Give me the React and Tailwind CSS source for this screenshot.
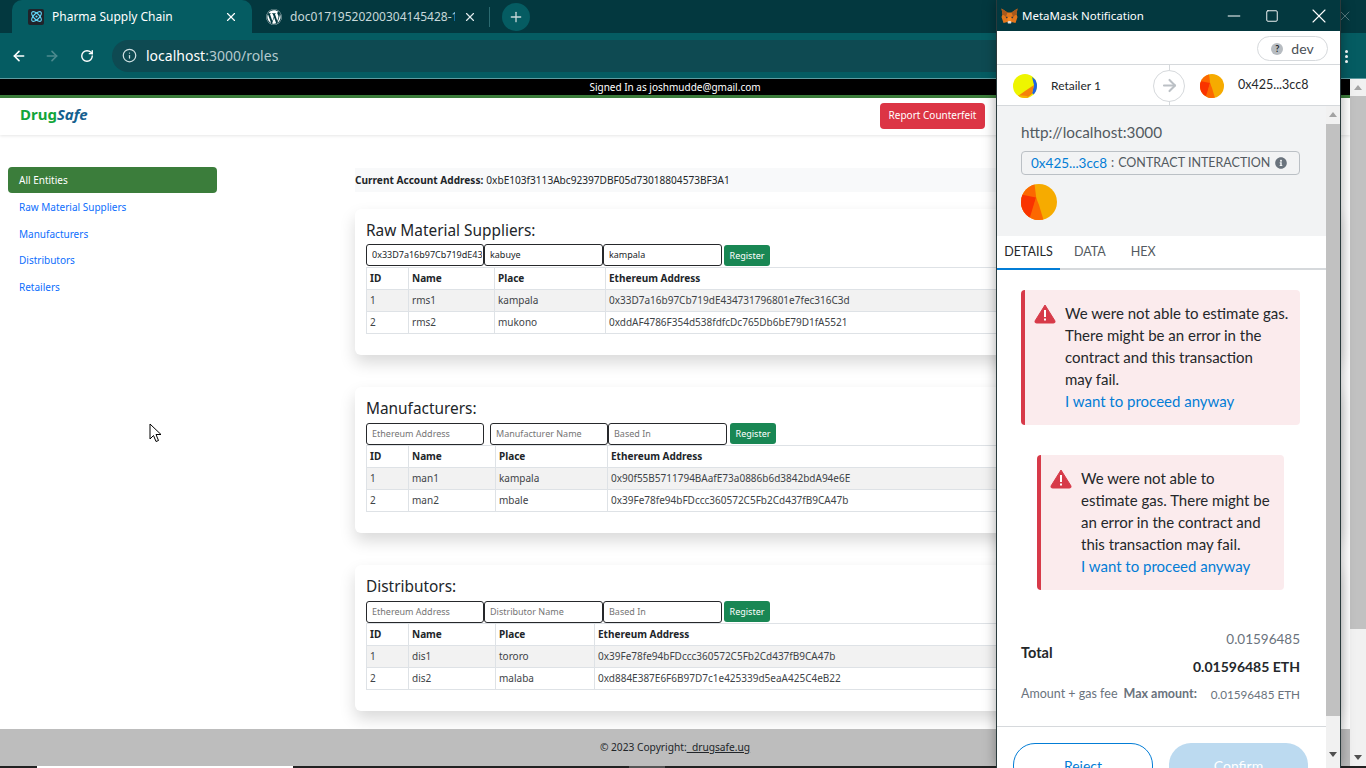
import { ArrowLeft, ArrowRight, RotateCw, Info, X, Plus, Atom, Minus, Square, ArrowRight as Arrow } from "lucide-react"
import { FaWordpress, FaInfoCircle } from "react-icons/fa"

const sections = [
  {
    title: "Raw Material Suppliers:",
    top: "h-[35px] pb-[6px]",
    row: "h-[23px]",
    inputs: [
      { value: "0x33D7a16b97Cb719dE43", w: "w-[118px]" },
      { value: "kabuye", w: "w-[119px]" },
      { value: "kampala", w: "w-[119px]" },
    ],
    btnGap: "ml-[2px] mt-[1px]",
    cols: ["w-[42px]", "w-[86px]", "w-[111px]", ""],
    rows: [
      ["1", "rms1", "kampala", "0x33D7a16b97Cb719dE434731796801e7fec316C3d"],
      ["2", "rms2", "mukono", "0xddAF4786F354d538fdfcDc765Db6bE79D1fA5521"],
    ],
  },
  {
    title: "Manufacturers:",
    top: "h-[36px] pb-[7px]",
    row: "h-[22px]",
    inputs: [
      { ph: "Ethereum Address", w: "w-[118px] mr-[6px]" },
      { ph: "Manufacturer Name", w: "w-[118px]" },
      { ph: "Based In", w: "w-[119px]" },
    ],
    btnGap: "ml-[3px]",
    cols: ["w-[42px]", "w-[87px]", "w-[112px]", ""],
    rows: [
      ["1", "man1", "kampala", "0x90f55B5711794BAafE73a0886b6d3842bdA94e6E"],
      ["2", "man2", "mbale", "0x39Fe78fe94bFDccc360572C5Fb2Cd437fB9CA47b"],
    ],
  },
  {
    title: "Distributors:",
    top: "h-[36px] pb-[7px]",
    row: "h-[22px]",
    inputs: [
      { ph: "Ethereum Address", w: "w-[118px]" },
      { ph: "Distributor Name", w: "w-[119px]" },
      { ph: "Based In", w: "w-[119px]" },
    ],
    btnGap: "ml-[2px]",
    cols: ["w-[42px]", "w-[87px]", "w-[99px]", ""],
    rows: [
      ["1", "dis1", "tororo", "0x39Fe78fe94bFDccc360572C5Fb2Cd437fB9CA47b"],
      ["2", "dis2", "malaba", "0xd884E387E6F6B97D7c1e425339d5eaA425C4eB22"],
    ],
  },
]

function Identicon({ size, kind }) {
  if (kind === "yellow") {
    return (
      <svg width={size} height={size} viewBox="0 0 24 24" className="shrink-0">
        <clipPath id="c1"><circle cx="12" cy="12" r="12" /></clipPath>
        <g clipPath="url(#c1)">
          <rect width="24" height="24" fill="#eef500" />
          <polygon points="19,3 24,7 24,24 19,19 21,11" fill="#1d63e6" />
          <polygon points="21,11 19,20 14,24 5,22 12,17" fill="#f5810a" />
          <polygon points="5,21 14,22 16,24 6,24" fill="#f6b300" />
        </g>
      </svg>
    )
  }
  return (
    <svg width={size} height={size} viewBox="0 0 24 24" className="shrink-0">
      <clipPath id={"c" + size}><circle cx="12" cy="12" r="12" /></clipPath>
      <g clipPath={"url(#c" + size + ")"}>
        <rect width="24" height="24" fill="#f6ab00" />
        <polygon points="0,0 9,0 12,24 0,24" fill="#fc6800" />
        <polygon points="0,7 10,9 6,22 0,24" fill="#f93300" />
        <polygon points="8,17 10,9 12,14 15,24 8,24" fill="#fc6800" />
      </g>
    </svg>
  )
}

function Fox() {
  return (
    <svg width="17" height="16" viewBox="0 0 34 32" className="shrink-0">
      <polygon points="1,1 13,9 21,9 33,1 31,13 33,18 29,30 21,28 13,28 5,30 1,18 3,13" fill="#e2761b" />
      <polygon points="1,1 13,9 10,17 3,13" fill="#a8591c" />
      <polygon points="33,1 21,9 24,17 31,13" fill="#a8591c" />
      <polygon points="13,28 17,24 21,28 20,31 14,31" fill="#e4dfdb" />
      <polygon points="9,17 14,18 11,21" fill="#233447" />
      <polygon points="25,17 20,18 23,21" fill="#233447" />
      <polygon points="14,18 20,18 21,26 13,26" fill="#f6851b" />
    </svg>
  )
}

function WarnBox({ className, lines }) {
  return (
    <div className={"flex rounded-[4px] border-l-[4px] border-[#d73a49] bg-[#fbebed] pt-[12px] pb-[16px] pl-[9px] " + className}>
      <svg width="22" height="20" viewBox="0 0 22 20" className="mt-[2px] shrink-0">
        <path d="M11 1 L21 17 Q21.500 19 19.500 19 L2.500 19 Q0.500 19 1 17 Z" fill="#d73a49" stroke="#d73a49" strokeLinejoin="round" strokeWidth="1" />
        <rect x="10" y="6" width="2" height="7" fill="#fff" />
        <rect x="10" y="14.500" width="2" height="2" fill="#fff" />
      </svg>
      <div className="ml-[9px] whitespace-nowrap text-[15px] leading-[22px] text-[#24272a]">
        {lines.map((l) => <div key={l}>{l}</div>)}
        <div className="text-[#037dd6]">I want to proceed anyway</div>
      </div>
    </div>
  )
}

function MetaMask() {
  return (
    <div className="absolute left-[996px] top-0 z-10 flex h-[768px] w-[345px] flex-col overflow-hidden border-x border-[#2a3a3c] bg-white shadow-[0_0_12px_rgba(0,0,0,0.35)] font-['Lato',sans-serif]">
      <div className="flex h-[31px] shrink-0 items-center bg-[#03383f] pl-[4px] font-['Noto_Sans',sans-serif] text-[11.500px] text-white">
        <Fox />
        <span className="ml-[4px] w-[202px] whitespace-nowrap">MetaMask Notification</span>
        <Minus size={20} strokeWidth={1.2} />
        <Square size={14} strokeWidth={1.6} className="ml-[21px]" />
        <X size={24} strokeWidth={1.1} className="ml-[28px]" />
      </div>
      <div className="flex h-[33px] shrink-0 items-center justify-end pr-[12px] pt-[2px]">
        <div className="flex h-[25px] w-[71px] items-center justify-center gap-[8px] rounded-full border border-[#d6d9dc] text-[14px] text-[#4a5055]">
          <span className="flex h-[12px] w-[12px] items-center justify-center rounded-full bg-[#b7bcc1] text-[9px] font-bold text-[#24272a]">?</span>
          dev
        </div>
      </div>
      <div className="relative flex h-[42px] shrink-0 items-center border-y border-[#d6d9dc] pl-[16px] pt-[1px] text-[12px] text-[#24272a]">
        <Identicon size={24} kind="yellow" />
        <span className="ml-[14px] w-[102px]">Retailer 1</span>
        <div className="absolute left-[172px] top-0 h-full w-px bg-[#d6d9dc]" />
        <div className="relative flex h-[32px] w-[32px] items-center justify-center rounded-full border border-[#d6d9dc] bg-white">
          <Arrow size={19} strokeWidth={2.6} className="text-[#bbc0c5]" />
        </div>
        <span className="ml-[15px]"><Identicon size={24} /></span>
        <span className="ml-[14px] text-[12.500px]">0x425...3cc8</span>
      </div>
      <div className="flex min-h-0 flex-1">
        <div className="w-[329px] shrink-0">
          <div className="h-[130px] bg-[#f2f3f4] pl-[24px] pt-[17px]">
            <div className="text-[15.300px] leading-[18px] text-[#535a61]">http://localhost:3000</div>
            <div className="mt-[10px] flex h-[24px] w-[279px] items-center whitespace-nowrap rounded-[4px] border border-[#bbc0c5] pl-[9px] text-[12.500px] text-[#535a61]">
              <span className="text-[13.500px] text-[#037dd6]">0x425...3cc8</span>
              <span className="ml-[4px]">:</span>
              <span className="ml-[4px]">CONTRACT INTERACTION</span>
              <FaInfoCircle size={12} className="ml-[5px] text-[#6a737d]" />
            </div>
            <div className="mt-[9px]"><Identicon size={36} /></div>
          </div>
          <div className="flex h-[34px] border-b-2 border-[#d6d9dc] pt-[1px] text-[12.500px] text-[#535a61]">
            <div className="-mb-[2px] flex w-[63px] items-center justify-center border-b-2 border-[#037dd6] text-[#24272a]">DETAILS</div>
            <div className="ml-[14px] flex items-center">DATA</div>
            <div className="ml-[25px] flex items-center">HEX</div>
          </div>
          <WarnBox
            className="ml-[24px] mt-[20px] h-[135px] w-[279px]"
            lines={["We were not able to estimate gas.", "There might be an error in the", "contract and this transaction", "may fail."]}
          />
          <WarnBox
            className="ml-[40px] mt-[30px] h-[135px] w-[247px]"
            lines={["We were not able to", "estimate gas. There might be", "an error in the contract and", "this transaction may fail."]}
          />
          <div className="mt-[35px] flex items-center justify-between pl-[24px] pr-[26px] text-[#24272a]">
            <span className="text-[14.500px] font-bold">Total</span>
            <div className="text-right leading-[28px]">
              <div className="text-[13.500px] text-[#6a737d]">0.01596485</div>
              <div className="text-[14px] font-bold">0.01596485 ETH</div>
            </div>
          </div>
          <div className="mt-[4px] flex items-center pl-[24px] pr-[26px] text-[12.500px] text-[#6a737d]">
            <span>Amount + gas fee</span>
            <span className="ml-[6px] font-bold">Max amount:</span>
            <span className="ml-auto text-[11.700px]">0.01596485 ETH</span>
          </div>
          <div className="mt-[22px] flex gap-[16px] border-t border-[#d6d9dc] px-[16px] pt-[16px]">
            <div className="flex h-[46px] w-[140px] items-center justify-center rounded-[22px] border border-[#037dd6] text-[14px] text-[#037dd6]">Reject</div>
            <div className="flex h-[46px] w-[139px] items-center justify-center rounded-[22px] bg-[#bcdaf0] text-[14px] text-white">Confirm</div>
          </div>
        </div>
        <div className="flex w-[14px] shrink-0 flex-col bg-[#f1f1f1]">
          <div className="mx-auto mt-[6px] h-0 w-0 border-x-[4px] border-b-[5px] border-x-transparent border-b-[#a3a3a3]" />
          <div className="mt-[7px] h-[592px] bg-[#c1c1c1]" />
          <div className="mx-auto mt-[36px] h-0 w-0 border-x-[4px] border-t-[5px] border-x-transparent border-t-[#505050]" />
        </div>
      </div>
    </div>
  )
}

function Section({ s }) {
  return (
    <div className="rounded-md bg-white px-[11px] pb-[21px] shadow-[0_8px_16px_rgba(0,0,0,0.15)]">
      <h4 className={s.top + " flex items-end text-[15.400px] leading-none text-[#212529]"}>{s.title}</h4>
      <div className={s.row + " flex items-start"}>
        {s.inputs.map((inp, i) => (
          <input
            key={i}
            readOnly
            value={inp.value || ""}
            placeholder={inp.ph}
            className={inp.w + " h-[22px] rounded-[3px] border border-[#26282b] pl-[5px] pr-[1px] pb-[2px] text-[9px] text-[#212529] placeholder:text-[#757575]"}
          />
        ))}
        <div className={s.btnGap + " flex h-[21px] w-[46px] items-center justify-center rounded-[3px] bg-[#198754] text-[9px] text-white"}>Register</div>
      </div>
      <table className="w-full table-fixed border-collapse text-[10px] text-[#3e4347]">
        <thead>
          <tr className="h-[22px] font-bold text-[#212529]">
            {["ID", "Name", "Place", "Ethereum Address"].map((h, i) => (
              <th key={h} className={s.cols[i] + " border border-[#dee2e6] px-[3px] text-left font-bold"}>{h}</th>
            ))}
          </tr>
        </thead>
        <tbody>
          {s.rows.map((r, i) => (
            <tr key={i} className={i === 0 ? "h-[22px] bg-[#f2f2f2]" : "h-[22px]"}>
              {r.map((c) => (
                <td key={c} className="border border-[#dee2e6] px-[3px]">{c}</td>
              ))}
            </tr>
          ))}
        </tbody>
      </table>
    </div>
  )
}

export default function App() {
  return (
    <div className="relative flex h-[768px] w-[1366px] flex-col overflow-hidden bg-white font-['Noto_Sans',sans-serif]">
      {/* tab strip */}
      <div className="flex h-[33px] shrink-0 items-end bg-[#03383f] pl-[12px] text-[12px]">
        <div className="flex h-[33px] w-[240px] items-center rounded-t-[10px] bg-[#055c62] pl-[16px] text-white">
          <span className="flex h-[16px] w-[16px] items-center justify-center rounded-[2px] bg-[#20232a]"><Atom size={13} className="text-[#61dafb]" /></span>
          <span className="ml-[8px] w-[172px]">Pharma Supply Chain</span>
          <X size={14} />
        </div>
        <div className="flex h-[33px] items-center pl-[14px] text-[#c8d8da]">
          <FaWordpress size={16} className="text-white" />
          <span className="ml-[8px] w-[165px] overflow-hidden whitespace-nowrap">doc01719520200304145428-1.pdf</span>
          <X size={14} className="ml-[8px] text-[#dfe9ea]" />
          <div className="ml-[12px] h-[20px] w-px bg-[#2b6a70]" />
          <div className="ml-[12px] flex h-[28px] w-[28px] items-center justify-center rounded-full bg-[#055c62]"><Plus size={16} /></div>
        </div>
        <X size={16} strokeWidth={1.2} className="mb-[9px] ml-auto mr-[13px] text-[#6d8c90]" />
      </div>
      {/* toolbar */}
      <div className="flex h-[46px] shrink-0 items-center border-b border-[#5d9ba0] bg-[#055c62] pl-[11px]">
        <ArrowLeft size={16} strokeWidth={2.4} className="text-white" />
        <ArrowRight size={16} strokeWidth={2.4} className="ml-[17px] text-[#4d8a8f]" />
        <RotateCw size={14} strokeWidth={2.4} className="ml-[20px] text-white" />
        <div className="ml-[18px] flex h-[32px] w-[1200px] items-center rounded-full bg-[#0e4a52] pl-[10px] text-[14px]">
          <Info size={15} className="text-[#cfe0e2]" />
          <span className="ml-[9px] text-white">localhost</span>
          <span className="text-[#b5cbce]">:3000/roles</span>
        </div>
      </div>
      <div className="relative flex min-h-0 flex-1">
        <div className="flex w-[1350px] flex-col">
          <div className="h-[16px] shrink-0 bg-black text-center text-[10px] leading-[16px] text-white">Signed In as joshmudde@gmail.com</div>
          <div className="h-[3px] shrink-0 bg-[#3b7d3b]" />
          {/* nav */}
          <div className="flex h-[37px] shrink-0 items-center justify-between pb-[2px] pl-[20px] pr-[365px] shadow-[0_1px_3px_rgba(0,0,0,0.1)]">
            <div className="mb-[2px] text-[15px] font-bold"><span className="text-[#12a53a]">Drug</span><span className="italic text-[#15608f]">Safe</span></div>
            <div className="flex h-[26px] w-[105px] items-center justify-center rounded-[4px] bg-[#dc3545] text-[10px] text-white">Report Counterfeit</div>
          </div>
          <div className="flex min-h-0 flex-1 pt-[32px]">
            <div className="w-[355px] shrink-0 pl-[8px] text-[10px] text-[#0d6efd]">
              <div className="mb-[1px] flex h-[26px] w-[209px] items-center rounded-[4px] bg-[#3b7d3b] pl-[11px] pt-[1px] text-white">All Entities</div>
              {["Raw Material Suppliers", "Manufacturers", "Distributors", "Retailers"].map((t) => (
                <div key={t} className="flex h-[26.700px] items-center pl-[11px]">{t}</div>
              ))}
            </div>
            <div className="min-w-0 flex-1 pr-[10px]">
              <div className="mt-[1px] flex h-[24px] items-center bg-[#f8f9fa] pt-[1px] text-[10.100px] text-[#212529]">
                <b className="mr-[3px]">Current Account Address:</b>0xbE103f3113Abc92397DBF05d73018804573BF3A1
              </div>
              <div className="mt-[17px] flex flex-col gap-[32px]">
                {sections.map((s) => <Section key={s.title} s={s} />)}
              </div>
            </div>
          </div>
          <div className="flex h-[37px] shrink-0 items-center justify-center bg-[#bdbdbd] text-[10.200px] text-[#212529]">
            © 2023 Copyright:<span className="underline">&nbsp;&nbsp;drugsafe.ug</span>
          </div>
        </div>
        {/* page scrollbar */}
        <div className="flex w-[16px] shrink-0 flex-col bg-[#f1f1f1]">
          <div className="mx-auto mt-[6px] h-0 w-0 border-x-[4px] border-b-[5px] border-x-transparent border-b-[#a3a3a3]" />
          <div className="mt-[6px] h-[533px] bg-[#c1c1c1]" />
          <div className="mx-auto mt-auto mb-[6px] h-0 w-0 border-x-[4px] border-t-[5px] border-x-transparent border-t-[#505050]" />
        </div>
        <svg width="14" height="20" viewBox="0 0 14 20" className="absolute left-[149px] top-[344px]">
          <path d="M1 1 L1 16 L4.500 12.500 L7 18.500 L9.500 17.500 L7 11.500 L12 11.500 Z" fill="#fff" stroke="#000" strokeWidth="1" />
        </svg>
      </div>
      {/* sliver of the taskbar */}
      <div className="flex h-[2px] shrink-0 bg-[#222222]">
        <div className="ml-[37px] w-[256px] bg-white" />
        <div className="ml-[336px] w-[36px] bg-[#555555]" />
      </div>
      {/* toolbar menu dots, left of the page scrollbar */}
      <div className="absolute left-[1345px] top-[50px] flex flex-col gap-[2px]">
        <span className="h-[3px] w-[3px] rounded-full bg-white" />
        <span className="h-[3px] w-[3px] rounded-full bg-white" />
        <span className="h-[3px] w-[3px] rounded-full bg-white" />
      </div>
      <MetaMask />
    </div>
  )
}
